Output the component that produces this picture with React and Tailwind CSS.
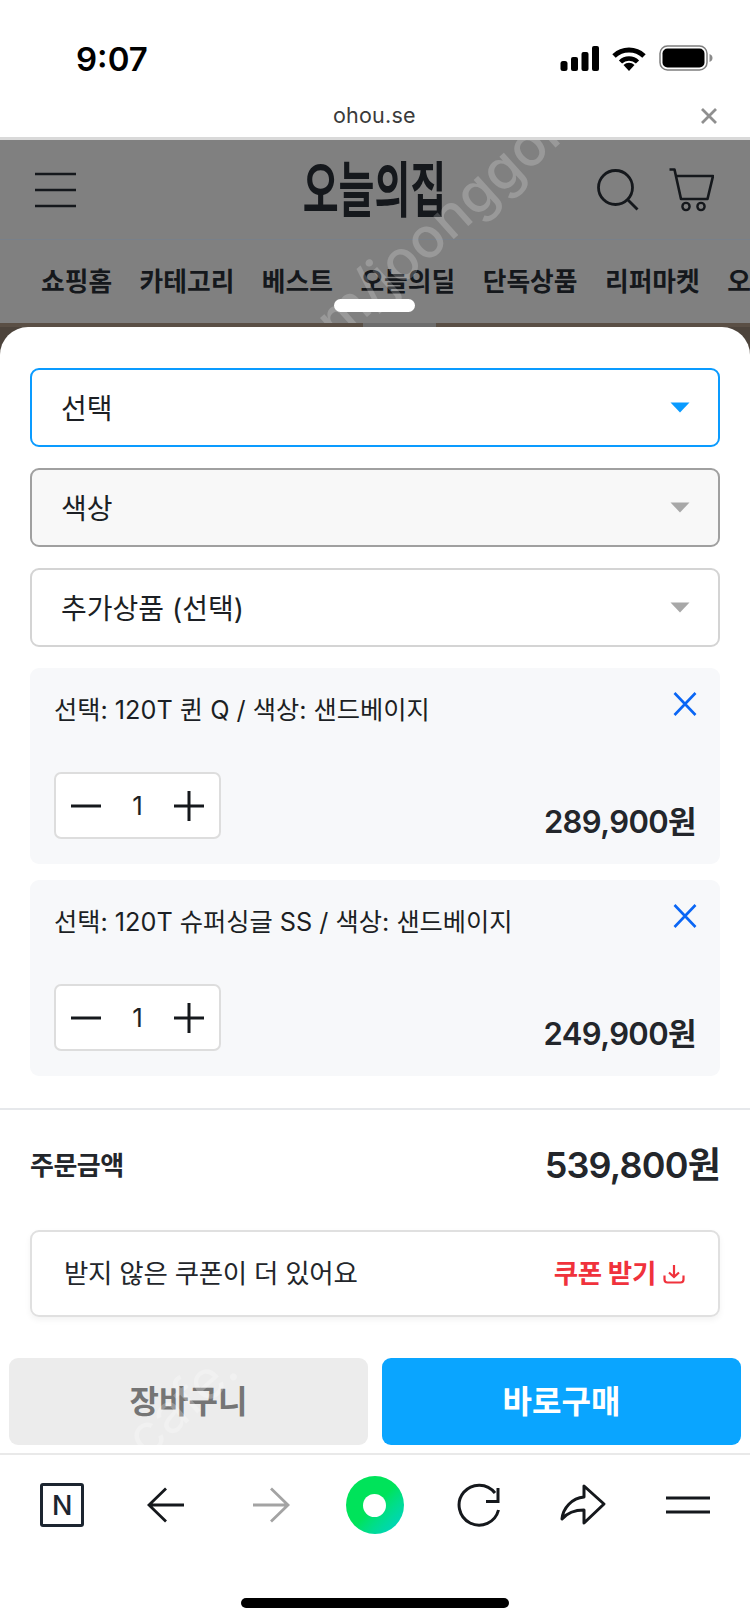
import React from "react";

const FONT = "font-['Inter','Noto_Sans_CJK_KR',sans-serif]";

function Chevron({ color }) {
  return (
    <svg width="20" height="11" viewBox="0 0 20 11" className="shrink-0">
      <path d="M0.5 0.5H19.5L10 10.5Z" fill={color} />
    </svg>
  );
}

function Field({ label, className, arrow }) {
  return (
    <div className={`h-[79px] rounded-[9px] flex items-center justify-between pl-[29px] pr-[28px] text-[28px] text-[#1c1f24] ${className}`}>
      <span className="pt-[2px]">{label}</span>
      <Chevron color={arrow} />
    </div>
  );
}

function Stepper() {
  return (
    <div className="w-[167px] h-[67px] bg-white border-2 border-[#dddddd] rounded-[7px] flex items-center justify-between px-[14px]">
      <svg width="32" height="32" viewBox="0 0 32 32">
        <path d="M1 16H31" stroke="#15181c" strokeWidth="3" />
      </svg>
      <span className="text-[26px] font-normal text-[#1c1f24] leading-none">1</span>
      <svg width="32" height="32" viewBox="0 0 32 32">
        <path d="M1 16H31M16 1V31" stroke="#15181c" strokeWidth="3" />
      </svg>
    </div>
  );
}

function OptionCard({ label, price }) {
  return (
    <div className="h-[196px] rounded-[9px] bg-[#f7f8fa] px-[24px] pt-[24px] pb-[25px] flex flex-col justify-between">
      <div className="flex justify-between items-start">
        <span className="text-[25.25px] leading-[34px] pt-px text-[#1c1f24]">{label}</span>
        <svg width="24" height="24" viewBox="0 0 24 24" className="-mr-px">
          <path d="M1.5 1L22.5 23M22.5 1L1.5 23" stroke="#0a66f5" strokeWidth="2.6" fill="none" />
        </svg>
      </div>
      <div className="flex justify-between items-end">
        <Stepper />
        <span className="text-[31px] leading-[40px] -mb-[3px] font-semibold tracking-[-0.6px] text-[#23262b]">{price}</span>
      </div>
    </div>
  );
}

export default function App() {
  return (
    <div className={`${FONT} w-[750px] h-[1624px] bg-white flex flex-col overflow-hidden`}>
      {/* status bar */}
      <div className="h-[94px] pt-[41px] pl-[76px] pr-[37px] flex items-start justify-between">
        <span className="text-[33px] leading-[36px] font-semibold text-black">9:07</span>
        <div className="flex items-center gap-[13px] mt-[4px]">
          <svg width="39" height="25" viewBox="0 0 39 25">
            <rect x="0.5" y="15" width="7" height="10" rx="2.5" fill="#000" />
            <rect x="11" y="11" width="7" height="14" rx="2" fill="#000" />
            <rect x="21.5" y="6" width="7" height="19" rx="2" fill="#000" />
            <rect x="32" y="0" width="7" height="25" rx="2" fill="#000" />
          </svg>
          <svg width="34" height="25" viewBox="0 0 34 25">
            <path d="M2 10A22 22 0 0 1 32 10" stroke="#000" strokeWidth="5" fill="none" />
            <path d="M8.5 16A12 12 0 0 1 25.5 16" stroke="#000" strokeWidth="4.5" fill="none" />
            <path d="M17 25L11.5 19A8 8 0 0 1 22.5 19Z" fill="#000" />
          </svg>
          <svg width="54" height="26" viewBox="0 0 54 26">
            <rect x="1" y="1" width="47" height="24" rx="7.5" stroke="#7d7d7d" strokeWidth="1.5" fill="none" />
            <rect x="3.5" y="3.5" width="42" height="19" rx="5" fill="#000" />
            <path d="M50.5 9C52.5 9.8 53.5 11 53.5 13C53.5 15 52.5 16.2 50.5 17Z" fill="#8a8a8a" />
          </svg>
        </div>
      </div>

      {/* url bar */}
      <div className="h-[43px] flex items-center pl-[333px] pr-[32px] justify-between">
        <span className="text-[21.5px] leading-none tracking-[0.2px] text-[#3a3a3a]">ohou.se</span>
        <svg width="18" height="18" viewBox="0 0 18 18">
          <path d="M2 2L16 16M16 2L2 16" stroke="#8f8f8f" strokeWidth="2.8" />
        </svg>
      </div>
      <div className="h-[3px] bg-[#d9d9d9]" />

      {/* dimmed page */}
      <div className="relative h-[183px] bg-[#808080] overflow-hidden">
        <div className="h-[100px] border-b border-[#78808a] flex items-center pl-[35px] pr-[36px]">
          <div className="flex-1">
            <svg width="41" height="36" viewBox="0 0 41 36">
              <path d="M0 2H41M0 18H41M0 34H41" stroke="#15181c" strokeWidth="2.6" />
            </svg>
          </div>
          <span className="text-[39px] font-bold leading-none text-[#15181c] scale-y-[1.55]">오늘의집</span>
          <div className="flex-1 flex justify-end items-center gap-[30px]">
            <svg width="42" height="42" viewBox="0 0 42 42">
              <circle cx="18.5" cy="18.5" r="17" stroke="#15181c" strokeWidth="2.8" fill="none" />
              <path d="M30.5 30.5L40.5 40.5" stroke="#15181c" strokeWidth="2.8" />
            </svg>
            <svg width="45" height="44" viewBox="0 0 45 44">
              <path d="M0.5 1.5H5.5L12 31H38.5L44 8H7" stroke="#15181c" strokeWidth="2.6" fill="none" strokeLinejoin="round" />
              <circle cx="17" cy="38.5" r="3.6" stroke="#15181c" strokeWidth="2.4" fill="none" />
              <circle cx="32" cy="38.5" r="3.6" stroke="#15181c" strokeWidth="2.4" fill="none" />
            </svg>
          </div>
        </div>
        <div className="h-[82px] flex items-center pl-[41px] pt-[3px] gap-[27.5px] whitespace-nowrap text-[25.75px] font-bold text-[#15181c]">
          <span>쇼핑홈</span>
          <span>카테고리</span>
          <span>베스트</span>
          <span>오늘의딜</span>
          <span>단독상품</span>
          <span>리퍼마켓</span>
          <span>오늘의</span>
        </div>
        <div className="absolute left-[275px] top-[205px] origin-left -rotate-[42deg] whitespace-nowrap text-[56px] leading-none font-medium text-white/20">
          com/joonggonara
        </div>
        <div className="absolute left-[334px] top-[159px] w-[81px] h-[13px] rounded-full bg-white" />
      </div>

      {/* sheet backdrop */}
      <div className="flex-1 flex flex-col bg-[#4d443c]">
        <div className="h-[4px] flex">
          <div className="w-[363px] bg-[#5a4f45]" />
          <div className="w-[73px] bg-[#6d6d6d]" />
          <div className="flex-1 bg-[#5a4f45]" />
        </div>

        {/* sheet */}
        <div className="flex-1 bg-white rounded-t-[28px] flex flex-col text-[#1c1f24]">
          <div className="px-[30px] pt-[41px] flex flex-col">
            <div className="flex flex-col gap-[21px]">
              <Field label="선택" className="border-2 border-[#0a9bff] bg-white" arrow="#0a9bff" />
              <Field label="색상" className="border-2 border-[#a0a0a0] bg-[#f8f8f8]" arrow="#a8a8a8" />
              <Field label="추가상품 (선택)" className="border-2 border-[#d4d4d4] bg-white" arrow="#a8a8a8" />
            </div>
            <div className="mt-[21px] flex flex-col gap-[16px]">
              <OptionCard label="선택: 120T 퀸 Q / 색상: 샌드베이지" price="289,900원" />
              <OptionCard label="선택: 120T 슈퍼싱글 SS / 색상: 샌드베이지" price="249,900원" />
            </div>
          </div>

          <div className="mt-[32px] h-[2px] bg-[#e6e8eb]" />

          <div className="px-[30px] mt-[30px]">
            <div className="h-[50px] flex items-center justify-between">
              <span className="text-[26px] font-bold tracking-[-0.5px] text-[#23262b]">주문금액</span>
              <span className="text-[36px] font-semibold tracking-[-0.8px] text-[#23262b]">539,800원</span>
            </div>
            <div className="mt-[40px] h-[87px] rounded-[9px] border-2 border-[#e0e0e0] shadow-[0_3px_6px_rgba(0,0,0,0.05)] flex items-center justify-between pl-[32px] pr-[33px]">
              <span className="text-[26.5px] tracking-[-0.3px] text-[#23262b]">받지 않은 쿠폰이 더 있어요</span>
              <div className="flex items-center gap-[7px]">
                <span className="text-[26.5px] font-bold tracking-[-0.3px] text-[#f0323c]">쿠폰 받기</span>
                <svg width="22" height="20" viewBox="0 0 22 20">
                  <path d="M11 1V12.5M6 8.5L11 13L16 8.5M1.5 11.5V15.5C1.5 17.5 2.5 18.5 4.5 18.5H17.5C19.5 18.5 20.5 17.5 20.5 15.5V11.5" stroke="#f0323c" strokeWidth="2.2" fill="none" />
                </svg>
              </div>
            </div>
          </div>

          <div className="mt-[41px] px-[9px] flex gap-[14px]">
            <div className="relative overflow-hidden flex-1 h-[87px] pt-px rounded-[9px] bg-[#ececec] flex items-center justify-center text-[32px] font-bold text-[#757575]">
              장바구니
              <span className="absolute left-[125px] top-[60px] origin-left -rotate-[42deg] text-[54px] leading-none font-normal text-white/25">cafe.</span>
            </div>
            <div className="flex-1 h-[87px] pt-px rounded-[9px] bg-[#0aa5ff] flex items-center justify-center text-[32px] font-bold text-white">
              바로구매
            </div>
          </div>

          <div className="mt-[8px] h-[2px] bg-[#e9e9e9]" />

          {/* browser toolbar */}
          <div className="h-[100px] px-[10px] grid grid-cols-7 items-center justify-items-center">
            <div className="w-[44px] h-[44px] border-[3px] border-[#1c2530] rounded-[3px] flex items-center justify-center text-[27px] leading-none font-medium text-[#1c2530]">N</div>
            <svg width="38" height="36" viewBox="0 0 38 36">
              <path d="M19 1.5L2 18L19 34.5M2.5 18H37" stroke="#15181c" strokeWidth="2.8" fill="none" />
            </svg>
            <svg width="38" height="36" viewBox="0 0 38 36">
              <path d="M19 1.5L36 18L19 34.5M35.5 18H1" stroke="#a3a3a3" strokeWidth="2.8" fill="none" />
            </svg>
            <div className="w-[58px] h-[58px] rounded-full bg-gradient-to-br from-[#00e35a] from-50% to-[#00cfd0] flex items-center justify-center">
              <div className="w-[23px] h-[23px] rounded-full bg-white" />
            </div>
            <svg width="48" height="48" viewBox="0 0 48 48">
              <path d="M43.5 29A20 20 0 1 1 40 12" stroke="#15181c" strokeWidth="3" fill="none" />
              <path d="M31 20.5H43V7" stroke="#15181c" strokeWidth="3" fill="none" />
            </svg>
            <svg width="48" height="44" viewBox="2 0 48 44">
              <path d="M46 21L26 3V14C14 15 5 25 4 36C10 29 18 27 26 27V40Z" stroke="#15181c" strokeWidth="3" fill="none" strokeLinejoin="round" />
            </svg>
            <svg width="44" height="18" viewBox="0 0 44 18">
              <path d="M0 2H44M0 16H44" stroke="#15181c" strokeWidth="3" />
            </svg>
          </div>

          <div className="mt-[43px] mx-auto w-[268px] h-[10px] rounded-full bg-black" />
        </div>
      </div>
    </div>
  );
}
